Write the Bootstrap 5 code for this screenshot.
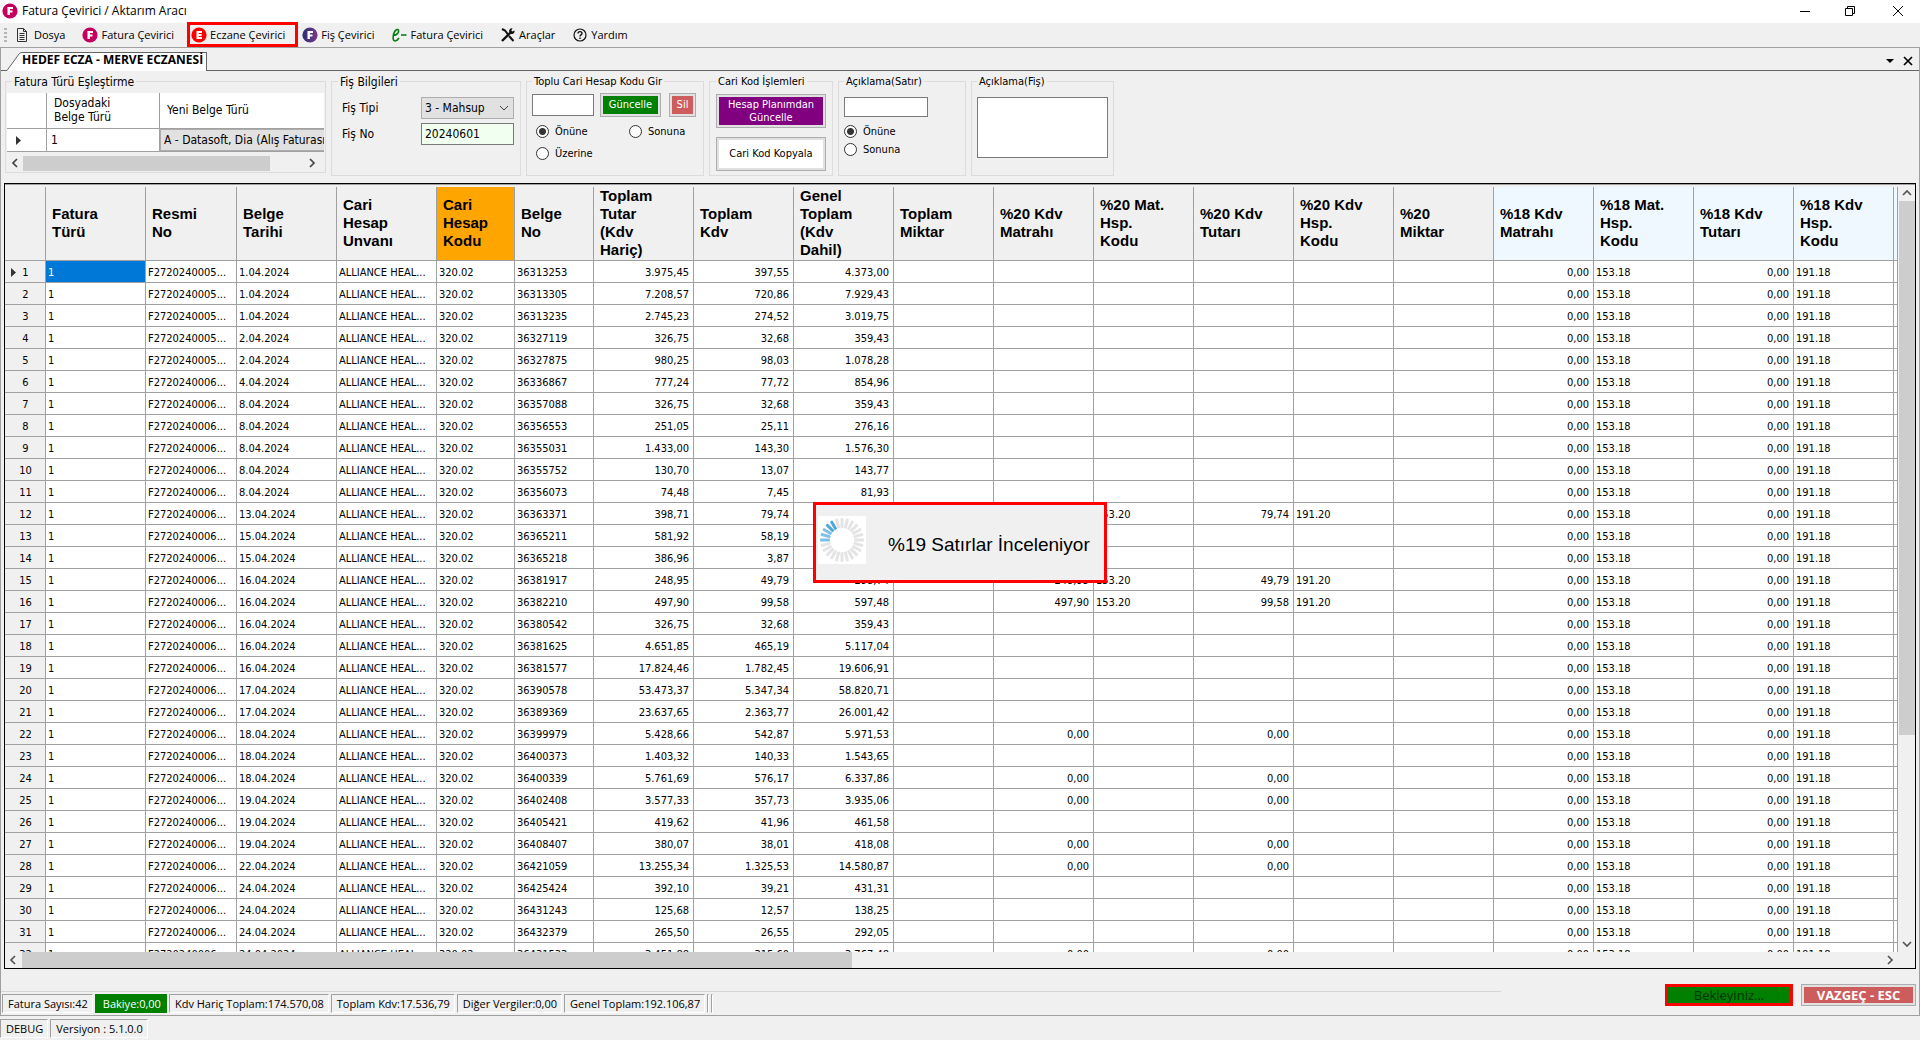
<!DOCTYPE html>
<html lang="tr">
<head>
<meta charset="utf-8">
<meta name="viewport" content="width=device-width, initial-scale=1">
<title>Fatura Çevirici / Aktarım Aracı</title>
<link href="https://cdn.jsdelivr.net/npm/bootstrap@5.3.0/dist/css/bootstrap.min.css" rel="stylesheet">
<style>
:root{--face:#f0f0f0;--line:#a0a0a0;--ui:"Open Sans","Noto Sans",sans-serif;--dlg:"DejaVu Sans Condensed","DejaVu Sans",sans-serif}
body{background:var(--face);color:#000;font:12px/16px var(--dlg);overflow:hidden}
button,input,select,textarea{font:inherit;color:inherit;border-radius:0}
.titlebar{background:#fff;height:23px;padding:0 16px 0 2px;font-family:var(--ui);font-size:12px}
.titlebar button,.tabstrip button{border:0;background:none;padding:0;display:flex}
.menubar{height:25px;padding-left:4px;border-bottom:1px solid var(--line);font-family:var(--ui);font-size:11px}
.menubar a{display:flex;align-items:center;gap:3px;height:25px;border:3px solid transparent;padding:0 10px 0 1px;color:#000;text-decoration:none}
.menubar a.marked{border-color:#f00}
.grip{width:3px;height:14px;margin-right:4px;background:repeating-linear-gradient(#b4b4b4 0 2px,transparent 2px 4px)}
.workspace{border:1px solid var(--line);border-top:0;min-height:0}
.tabstrip{height:23px;padding:4px 6px 0;border-bottom:1px solid #646464}
.doctab{margin-bottom:-1px;height:19px;font:bold 12px/14px var(--ui)}
.doctab svg{display:block}
.doctab a{background:#fff;border-top:1px solid #646464;border-right:1px solid #646464;color:#000;text-decoration:none;padding-right:3px;height:19px}
.options{padding:4px;gap:5px;padding-bottom:7px}
.grp{border:1px solid #dcdcdc;height:101px;font-size:11px;line-height:14px;min-width:0}
.grp legend{float:none;width:auto;font-size:inherit;line-height:14px;margin:0 0 0 5px;padding:0 2px}
.grp.large{font-size:12px}
.grp-match{width:321px;height:98px;padding:0 1px}
.grp-slip{width:190px;padding:0 6px}
.grp-bulk{width:178px;padding:0 5px}
.grp-code{width:124px;padding:0 6px}
.grp-row{width:128px;padding:0 5px}
.grp-note{width:143px;padding:0 5px}
.field{border:1px solid #7a7a7a;background:#fff;padding:0 3px;height:22px;min-width:0}
.field.short{height:20px}
.pick{border:1px solid #adadad;background:#e1e1e1;padding:0 3px;height:22px;appearance:none}
.pick-wrap svg{position:absolute;right:5px;top:8px;pointer-events:none}
.push{border:1px solid #adadad;box-shadow:inset 0 0 0 2px #e1e1e1;padding:0 2px;line-height:13px;color:#fff}
.green{background:#008000}.rose{background:#cd5c5c}.purple{background:#800080}
.pair{gap:9px;margin-top:5px}
.opt{display:flex;align-items:center;gap:6px}
.opt input{appearance:none;width:13px;height:13px;margin:0;border:1px solid #333;border-radius:50%;background:#fff}
.opt input:checked{background:radial-gradient(#333 0 3px,#fff 4px)}
.match-view{height:59px;overflow:hidden;margin-top:4px;background:#fff}
.match-tbl{width:420px;table-layout:fixed;border-collapse:separate;border-spacing:0;margin:0;line-height:14px}
.match-tbl th,.match-tbl td{border:0 solid var(--line);border-width:0 1px 1px 0;padding:0 0 0 7px;font-weight:normal}
.match-tbl td{padding:0 0 0 4px}
.match-tbl tr>*{height:23px}
.match-tbl thead tr>*{height:36px}
.scrollbox{background:var(--face)}
.thumb{background:#cdcdcd}
.sheet{border:1px solid #000;margin:0 3px;min-height:0}
.sheet-in{border-top:1px solid var(--line);min-height:0}
.view{overflow:hidden;min-width:0;min-height:0;padding-top:2px}
.ledger{width:1893px;table-layout:fixed;border-collapse:separate;border-spacing:0;background:#fff;font-size:11px;line-height:14px;margin:0}
.ledger th,.ledger td{border:0 solid var(--line);border-width:0 1px 1px 0;padding:3px 4px 0 2px;height:22px;white-space:nowrap;overflow:hidden}
.ledger td{text-overflow:ellipsis}
.ledger thead th{height:74px;font:bold 15px/18px "Liberation Sans",Arial,sans-serif;padding:0 0 0 6px;background:var(--face);white-space:normal}
.ledger thead th.hot{background:#ffa500}
.ledger thead th.pale{background:#f0f8ff}
.ledger tbody th{background:var(--face);font-weight:normal;text-align:center;padding:3px 0 0 1px}
.ledger .num{text-align:right}
.ledger td.picked{background:#0078d7;color:#fff}
.ledger tbody th svg{float:left;margin:2px -11px 0 5px}
.foot{height:46px}
.ruled{border-top:1px solid #d5d5d5;height:24px;padding:2px 0 0 1px;margin-top:22px}
.cells{font-family:var(--ui);font-size:11px;line-height:17px;gap:2px}
.cells span{border:1px solid var(--line);border-right-color:#fff;border-bottom-color:#fff;height:19px;padding:0 4px 0 5px;white-space:nowrap}
.cells .bal{background:#008000;color:#fff;border-color:#008000;padding:0 5px 0 7px}
.actions{gap:8px;padding:15px 3px 0 0}
.actions button{height:22px;font-family:var(--ui);font-size:13px}
.wait{width:128px;border:3px solid #f00;color:#003200;padding:0;line-height:14px}
.cancel{width:115px;font-weight:bold}
.statusbar{height:24px;padding-top:3px}
.busy{left:813px;top:502px;width:294px;height:81px;border:3px solid #f00;background:var(--face);font:19px/24px "Liberation Sans",Arial,sans-serif;gap:22px;padding:4px 0 0 2px}
.busy svg{background:#fff;margin-top:-10px}
</style>
<script src="https://cdn.jsdelivr.net/npm/bootstrap@5.3.0/dist/js/bootstrap.bundle.min.js"></script>
</head>
<body class="vh-100 d-flex flex-column">
<svg width="0" height="0" class="position-absolute">
  <defs>
    <linearGradient id="violet"><stop offset="0" stop-color="#2b2d72"/><stop offset="1" stop-color="#7a3a8c"/></linearGradient>
    <path id="ef" d="M5.500 4H11v2H7.900v1.500h2.600v1.900H7.900V12H5.500z" fill="#fff"/>
  </defs>
</svg>
<header class="titlebar d-flex align-items-center">
  <svg width="16" height="16" class="me-1"><circle cx="8" cy="8" r="7.600" fill="#c4005f"/><use href="#ef"/></svg>
  <span class="me-auto">Fatura Çevirici / Aktarım Aracı</span>
  <div class="d-flex gap-4">
    <button aria-label="Simge durumuna küçült" class="me-2"><svg width="14" height="12"><path d="M2 6.500h10" stroke="#000"/></svg></button>
    <button aria-label="Önceki boyut" class="me-2"><svg width="12" height="12"><path d="M1.500 3.500h7v7h-7zM3.500 3V1.500h7v7H9" fill="none" stroke="#000"/></svg></button>
    <button aria-label="Kapat" class="ms-1"><svg width="12" height="12"><path d="M1 1l10 10M11 1L1 11" stroke="#000"/></svg></button>
  </div>
</header>
<nav class="menubar d-flex align-items-center">
  <i class="grip"></i>
  <a href="#"><svg width="16" height="16"><path d="M2.500 1.500h6l3 3v10h-9zM8.500 1.500v3h3M4.500 6.500h5M4.500 8.500h5M4.500 10.500h5M4.500 12.500h5" fill="none" stroke="#333"/></svg>Dosya</a>
  <a href="#"><svg width="16" height="16"><circle cx="8" cy="8" r="7.600" fill="#c4005f"/><use href="#ef"/></svg>Fatura Çevirici</a>
  <a href="#" class="marked"><svg width="16" height="16"><circle cx="8" cy="8" r="7.600" fill="#f00"/><path d="M5.500 4h5.500v1.900H7.700v1.200h2.900v1.800H7.700v1.200H11V12H5.500z" fill="#fff"/></svg>Eczane Çevirici</a>
  <a href="#"><svg width="16" height="16"><circle cx="8" cy="8" r="7.600" fill="url(#violet)"/><use href="#ef"/></svg>Fiş Çevirici</a>
  <a href="#"><svg width="16" height="16"><path d="M2.500 8.500C6 8 8 5.500 7.500 3.500 7 1.500 4 2.500 2.800 6.500 1.500 11 2 14 4 14c1.500 0 3-1.500 4-3" fill="none" stroke="#0a7d14" stroke-width="1.700"/><path d="M10 8h5.500" stroke="#0a7d14" stroke-width="1.600"/></svg>Fatura Çevirici</a>
  <a href="#"><svg width="16" height="16"><path d="M2 2l3 1.500 3 4M9 9l4.500 5" fill="none" stroke="#111" stroke-width="2"/><path d="M2 14L10.500 5.500" stroke="#111" stroke-width="2.400"/><path d="M14.500 3.500l-2.200 1-1-1L12.500 1.300C10 1 8.500 3 9.300 5.200L11 7c2.200.5 4-1 3.500-3.500z" fill="#111"/></svg>Araçlar</a>
  <a href="#"><svg width="16" height="16"><circle cx="8" cy="8" r="6" fill="none" stroke="#111" stroke-width="1.200"/><path d="M6 6.500C6 4 10 4 10 6.500 10 8 8 7.800 8 9.500M8 10.500v1.500" fill="none" stroke="#111" stroke-width="1.400"/></svg>Yardım</a>
</nav>
<main class="workspace flex-fill d-flex flex-column">
  <div class="tabstrip d-flex align-items-start">
    <div class="doctab d-flex me-auto">
      <svg width="15" height="19"><path d="M0 18.500L12 2Q13 .5 15 .5V19H0z" fill="#fff"/><path d="M0 18.500L12 2Q13 .5 15 .5" fill="none" stroke="#646464"/></svg>
      <a href="#">HEDEF ECZA - MERVE ECZANESİ</a>
    </div>
    <button aria-label="Sekmeler" class="me-2 mt-1"><svg width="10" height="10"><path d="M1 3h8L5 7z"/></svg></button>
    <button aria-label="Sekmeyi kapat" class="mt-1"><svg width="10" height="10"><path d="M1 1l8 8M9 1L1 9" stroke="#000" stroke-width="1.700"/></svg></button>
  </div>
  <section class="options d-flex align-items-start">
    <fieldset class="grp large grp-match">
      <legend>Fatura Türü Eşleştirme</legend>
      <div class="match-view">
        <table class="match-tbl">
          <colgroup><col style="width:40px"><col style="width:113px"><col></colgroup>
          <thead><tr><th></th><th>Dosyadaki<br>Belge Türü</th><th>Yeni Belge Türü</th></tr></thead>
          <tbody><tr><td><svg width="8" height="9" class="ms-1"><path d="M1 0l5 4.500L1 9z" fill="#333"/></svg></td><td>1</td><td class="p-0"><select class="pick w-100 d-block" aria-label="Yeni Belge Türü"><option>A - Datasoft, Dia (Alış Faturası)</option></select></td></tr></tbody>
        </table>
      </div>
      <div class="scrollbox d-flex align-items-center justify-content-between ps-1 pe-2 mt-1" aria-hidden="true">
        <svg width="8" height="10"><path d="M6 1L2 5l4 4" fill="none" stroke="#444" stroke-width="1.700"/></svg>
        <div class="thumb me-auto ms-1" style="width:247px;height:15px"></div>
        <svg width="8" height="10"><path d="M2 1l4 4-4 4" fill="none" stroke="#444" stroke-width="1.700"/></svg>
      </div>
    </fieldset>
    <fieldset class="grp large grp-slip">
      <legend class="ms-0">Fiş Bilgileri</legend>
      <div class="d-flex align-items-center justify-content-between mt-2 ps-1">
        <label for="tipi">Fiş Tipi</label>
        <div class="pick-wrap position-relative"><select id="tipi" class="pick d-block" style="width:93px"><option>3 - Mahsup</option></select><svg width="10" height="6"><path d="M1 1l4 4 4-4" fill="none" stroke="#444"/></svg></div>
      </div>
      <div class="d-flex align-items-center justify-content-between mt-1 ps-1">
        <label for="no">Fiş No</label>
        <input id="no" class="field" style="width:93px;background:#f0fff0" value="20240601">
      </div>
    </fieldset>
    <fieldset class="grp grp-bulk">
      <legend class="ms-0">Toplu Cari Hesap Kodu Gir</legend>
      <div class="d-flex align-items-center mt-1">
        <input class="field" aria-label="Cari hesap kodu" style="width:62px">
        <button class="push green" style="width:61px;height:24px;margin-left:6px">Güncelle</button>
        <button class="push rose ms-2" style="width:27px;height:24px">Sil</button>
      </div>
      <div class="d-flex mt-2 ps-1">
        <label class="opt" style="width:93px"><input type="radio" name="bulk" checked>Önüne</label>
        <label class="opt"><input type="radio" name="bulk">Sonuna</label>
      </div>
      <label class="opt mt-2 ps-1"><input type="radio" name="bulk">Üzerine</label>
    </fieldset>
    <fieldset class="grp grp-code">
      <legend class="ms-0">Cari Kod İşlemleri</legend>
      <div class="pair d-flex flex-column">
        <button class="push purple" style="height:34px">Hesap Planımdan Güncelle</button>
        <button class="push bg-white text-black" style="height:34px">Cari Kod Kopyala</button>
      </div>
    </fieldset>
    <fieldset class="grp grp-row">
      <legend class="ms-0">Açıklama(Satır)</legend>
      <input class="field short d-block mt-2" aria-label="Açıklama (satır)" style="width:84px">
      <label class="opt mt-2"><input type="radio" name="rowpos" checked>Önüne</label>
      <label class="opt mt-1"><input type="radio" name="rowpos">Sonuna</label>
    </fieldset>
    <fieldset class="grp grp-note">
      <legend class="ms-0">Açıklama(Fiş)</legend>
      <textarea class="field d-block w-100 mt-2" aria-label="Açıklama (fiş)" style="height:61px;resize:none"></textarea>
    </fieldset>
  </section>
  <section class="sheet flex-fill d-flex flex-column">
    <div class="sheet-in flex-fill d-flex">
      <div class="view flex-fill">
        <table class="ledger">
          <colgroup id="cols"></colgroup>
          <thead><tr>
            <th></th><th>Fatura<br>Türü</th><th>Resmi<br>No</th><th>Belge<br>Tarihi</th><th>Cari<br>Hesap<br>Unvanı</th><th class="hot">Cari<br>Hesap<br>Kodu</th><th>Belge<br>No</th><th>Toplam<br>Tutar<br>(Kdv<br>Hariç)</th><th>Toplam<br>Kdv</th><th>Genel<br>Toplam<br>(Kdv<br>Dahil)</th><th>Toplam<br>Miktar</th><th>%20 Kdv<br>Matrahı</th><th>%20 Mat.<br>Hsp.<br>Kodu</th><th>%20 Kdv<br>Tutarı</th><th>%20 Kdv<br>Hsp.<br>Kodu</th><th>%20<br>Miktar</th><th class="pale">%18 Kdv<br>Matrahı</th><th class="pale">%18 Mat.<br>Hsp.<br>Kodu</th><th class="pale">%18 Kdv<br>Tutarı</th><th class="pale">%18 Kdv<br>Hsp.<br>Kodu</th><th class="pale"></th>
          </tr></thead>
          <tbody id="rows"></tbody>
        </table>
      </div>
      <div class="scrollbox d-flex flex-column align-items-center" style="width:16px" aria-hidden="true">
        <svg width="16" height="16"><path d="M4 10l4-4 4 4" fill="none" stroke="#555" stroke-width="1.700"/></svg>
        <div class="thumb w-100 mb-auto" style="height:69.600%"></div>
        <svg width="16" height="16"><path d="M4 6l4 4 4-4" fill="none" stroke="#555" stroke-width="1.700"/></svg>
      </div>
    </div>
    <div class="scrollbox d-flex align-items-center pe-3" aria-hidden="true">
      <svg width="17" height="16"><path d="M10 4L6 8l4 4" fill="none" stroke="#555" stroke-width="1.700"/></svg>
      <div class="flex-fill"><div class="thumb" style="width:44.600%;height:16px"></div></div>
      <svg width="17" height="16"><path d="M6 4l4 4-4 4" fill="none" stroke="#555" stroke-width="1.700"/></svg>
    </div>
  </section>
  <footer class="foot d-flex justify-content-between">
    <div class="ruled cells d-flex" style="width:1500px">
      <span>Fatura Sayısı:42</span><span class="bal">Bakiye:0,00</span><span>Kdv Hariç Toplam:174.570,08</span><span>Toplam Kdv:17.536,79</span><span>Diğer Vergiler:0,00</span><span>Genel Toplam:192.106,87</span><span class="p-0"></span><span class="p-0"></span>
    </div>
    <div class="actions d-flex">
      <button class="wait green">Bekleyiniz...</button>
      <button class="push rose cancel">VAZGEÇ - ESC</button>
    </div>
  </footer>
</main>
<div class="statusbar cells d-flex"><span>DEBUG</span><span>Versiyon : 5.1.0.0</span></div>
<div class="busy position-absolute d-flex align-items-center" role="status">
  <svg id="spin" width="48" height="48" viewBox="-24 -24 48 48"></svg><span>%19 Satırlar İnceleniyor</span>
</div>
<script>
const widths=[41,100,91,100,100,78,79,100,100,100,100,100,100,100,100,100,100,100,100,100,4];
document.getElementById('cols').innerHTML=widths.map(w=>`<col style="width:${w}px">`).join('');
// date | document no | net total | VAT | gross total | %20 base | %20 VAT
const data=`1.04.2024|36313253|3.975,45|397,55|4.373,00
1.04.2024|36313305|7.208,57|720,86|7.929,43
1.04.2024|36313235|2.745,23|274,52|3.019,75
2.04.2024|36327119|326,75|32,68|359,43
2.04.2024|36327875|980,25|98,03|1.078,28
4.04.2024|36336867|777,24|77,72|854,96
8.04.2024|36357088|326,75|32,68|359,43
8.04.2024|36356553|251,05|25,11|276,16
8.04.2024|36355031|1.433,00|143,30|1.576,30
8.04.2024|36355752|130,70|13,07|143,77
8.04.2024|36356073|74,48|7,45|81,93
13.04.2024|36363371|398,71|79,74|478,45|398,71|79,74
15.04.2024|36365211|581,92|58,19|640,11
15.04.2024|36365218|386,96|3,87|390,83
16.04.2024|36381917|248,95|49,79|298,74|248,95|49,79
16.04.2024|36382210|497,90|99,58|597,48|497,90|99,58
16.04.2024|36380542|326,75|32,68|359,43
16.04.2024|36381625|4.651,85|465,19|5.117,04
16.04.2024|36381577|17.824,46|1.782,45|19.606,91
17.04.2024|36390578|53.473,37|5.347,34|58.820,71
17.04.2024|36389369|23.637,65|2.363,77|26.001,42
18.04.2024|36399979|5.428,66|542,87|5.971,53|0,00|0,00
18.04.2024|36400373|1.403,32|140,33|1.543,65
18.04.2024|36400339|5.761,69|576,17|6.337,86|0,00|0,00
19.04.2024|36402408|3.577,33|357,73|3.935,06|0,00|0,00
19.04.2024|36405421|419,62|41,96|461,58
19.04.2024|36408407|380,07|38,01|418,08|0,00|0,00
22.04.2024|36421059|13.255,34|1.325,53|14.580,87|0,00|0,00
24.04.2024|36425424|392,10|39,21|431,31
24.04.2024|36431243|125,68|12,57|138,25
24.04.2024|36432379|265,50|26,55|292,05
24.04.2024|36431533|3.451,88|315,60|3.767,48|0,00|0,00`.split('\n');
const L=t=>`<td>${t||''}</td>`,R=t=>`<td class="num">${t||''}</td>`;
document.getElementById('rows').innerHTML=data.map((r,i)=>{
  const [d,no,net,vat,all,b20,v20]=r.split('|'),has=b20&&b20!=='0,00';
  return `<tr><th>${i?'':'<svg width="6" height="9"><path d="M0 0l5 4.500L0 9z" fill="#333"/></svg>'}${i+1}</th><td${i?'':' class="picked"'}>1</td>`
    +L('F272024000'+(i<5?5:6)+'...')+L(d)+L('ALLIANCE HEAL...')+L('320.02')+L(no)+R(net)+R(vat)+R(all)+R()
    +R(b20)+L(has&&'153.20')+R(v20)+L(has&&'191.20')+R()+R('0,00')+L('153.18')+R('0,00')+L('191.18')+L()+'</tr>';
}).join('');
const n=24;
document.getElementById('spin').innerHTML=Array.from({length:n},(_,k)=>{
  const lit=k>=18&&k<=22;
  return `<rect x="-1.500" y="-22" width="3" height="10" rx="1" fill="${lit?(k>20?'#4fa8dc':'#7cc0e6'):'#e4e4e4'}" transform="rotate(${k*15})"/>`;
}).join('');
</script>
</body>
</html>
